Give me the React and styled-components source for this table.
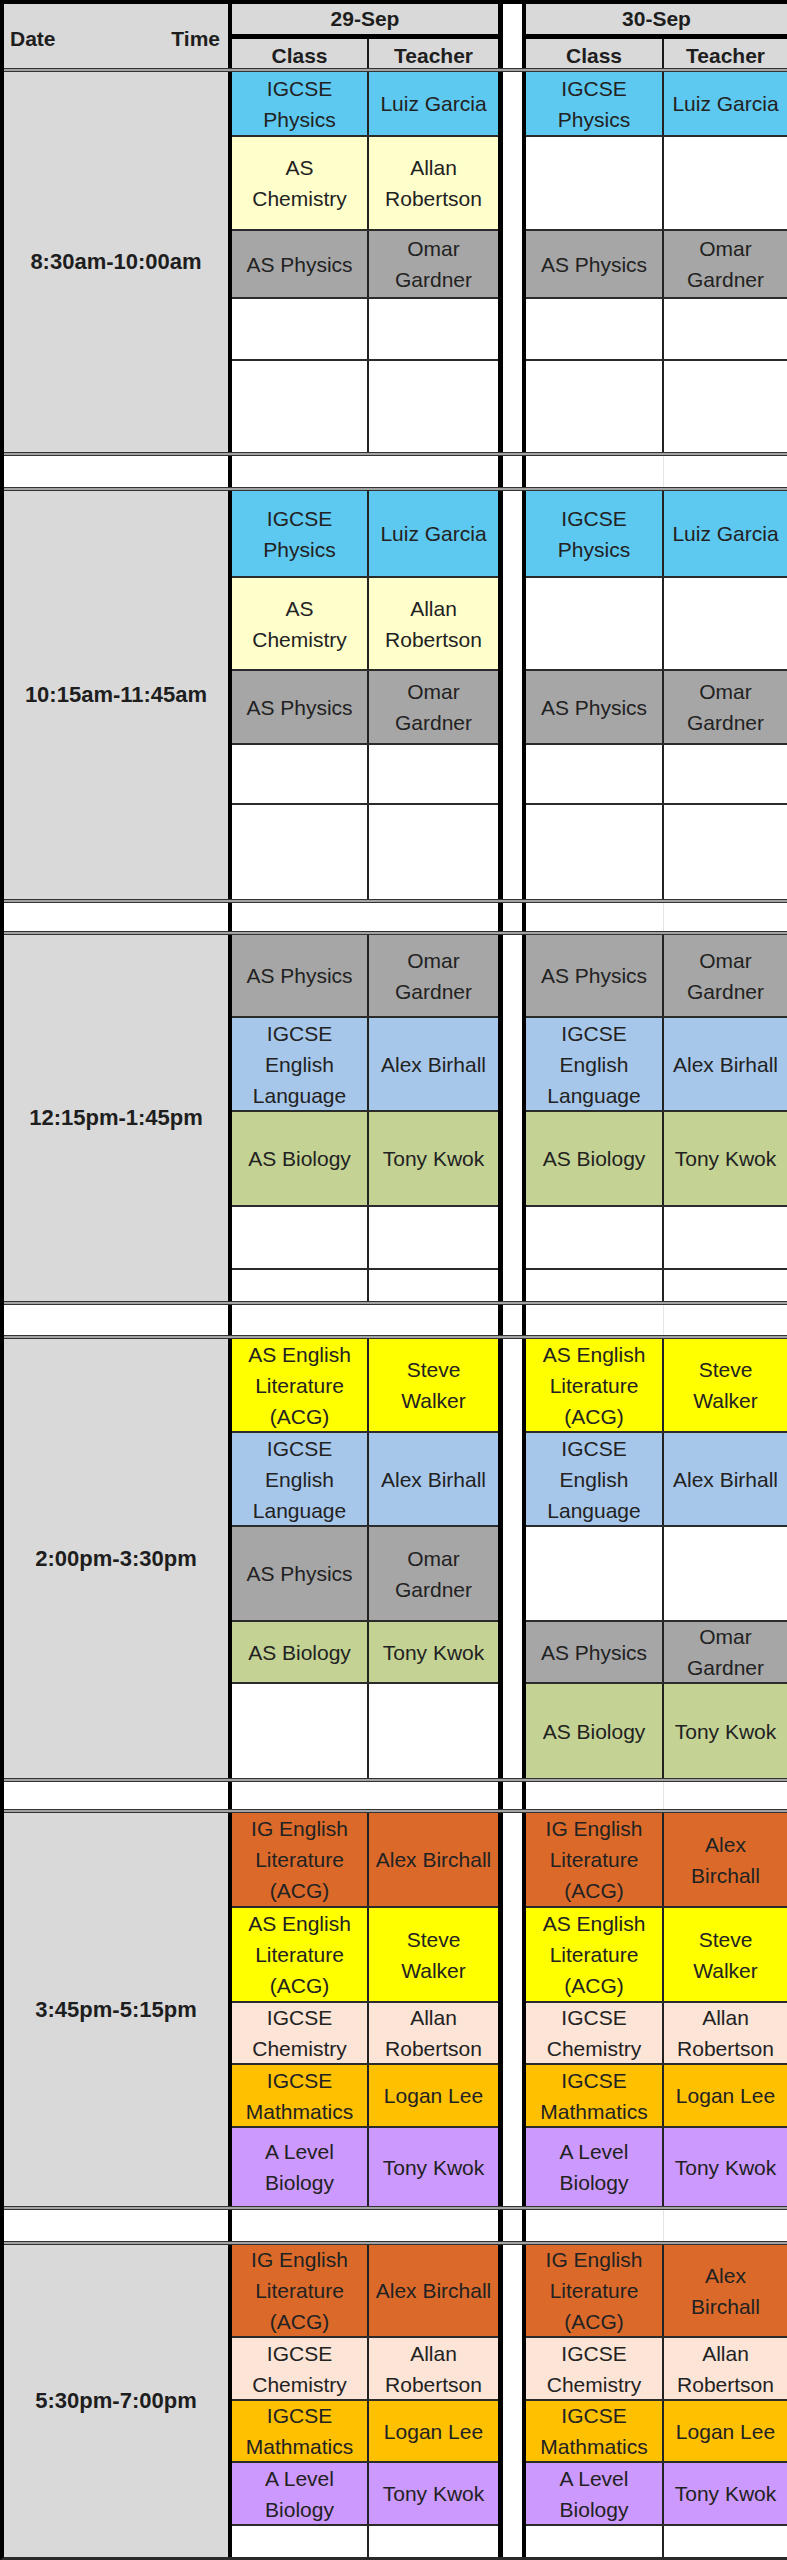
import React from 'react';
import styled, { createGlobalStyle, css } from 'styled-components';

const GlobalStyle = createGlobalStyle`
  html, body { margin: 0; padding: 0; background: #ffffff; }
  body {
    font-family: "Liberation Sans", Arial, sans-serif;
    color: #1e1e1e;
  }
  *, *::before, *::after { box-sizing: border-box; }
`;

const C = {
  head: '#d9d9d9',
  blue: '#5dc8f0',
  cream: '#ffffcc',
  gray: '#a6a6a6',
  steel: '#a7c7ea',
  olive: '#c4d294',
  yellow: '#ffff00',
  orange: '#db6a2a',
  peach: '#fce4d6',
  amber: '#ffc000',
  lavender: '#cc99ff',
  white: '#ffffff',
};

const DAY1 = { width: 271, classW: 137, side: 'left' };
const DAY2 = { width: 265, classW: 138, side: 'right' };

const Sheet = styled.div`
  width: 787px;
  display: flex;
  flex-direction: column;
  border-top: 4px solid #000;
  border-left: 4px solid #000;
  border-bottom: 3px solid #2a2a2a;
`;

const HeaderBand = styled.div`
  display: flex;
  height: 64px;
`;

const CornerCell = styled.div`
  width: 228px;
  flex: none;
  background: ${C.head};
  border-right: 4px solid #000;
  display: flex;
  align-items: center;
  justify-content: space-between;
  padding: 6px 8px 0 6px;
  font-weight: 700;
  font-size: 21px;
`;

const dayEdges = css`
  width: ${(p) => p.$w}px;
  flex: none;
  border-right: ${(p) => (p.$side === 'left' ? '5px solid #000' : 'none')};
  border-left: ${(p) => (p.$side === 'right' ? '4px solid #000' : 'none')};
`;

const DayHead = styled.div`
  ${dayEdges}
  display: flex;
  flex-direction: column;
`;

const DateTitle = styled.div`
  height: 35px;
  background: ${C.head};
  border-bottom: 5px solid #000;
  display: flex;
  align-items: center;
  justify-content: center;
  font-weight: 700;
  font-size: 21px;
`;

const SubHead = styled.div`
  display: flex;
  height: 29px;
  background: ${C.head};
`;

const SubCell = styled.div`
  width: ${(p) => (p.$w ? `${p.$w}px` : 'auto')};
  flex: ${(p) => (p.$w ? 'none' : '1')};
  border-right: ${(p) => (p.$w ? '2px solid #1a1a1a' : 'none')};
  display: flex;
  align-items: center;
  justify-content: center;
  padding-top: 4px;
  font-weight: 700;
  font-size: 21px;
`;

const GapCol = styled.div`
  width: 19px;
  flex: none;
  background: #fff;
`;

const DoubleRule = styled.div`
  height: 4px;
  background: #a3a3a3;
  border-top: 1px solid #333;
  border-bottom: 1px solid #333;
`;

const SectionBand = styled.div`
  display: flex;
`;

const TimeCell = styled.div`
  width: 228px;
  flex: none;
  background: ${C.head};
  border-right: 4px solid #000;
  display: flex;
  align-items: center;
  justify-content: center;
  font-weight: 700;
  font-size: 22px;
  white-space: nowrap;
`;

const DayColumn = styled.div`
  ${dayEdges}
  display: flex;
  flex-direction: column;
`;

const LessonRow = styled.div`
  display: flex;
  height: ${(p) => p.$h}px;
  background: ${(p) => p.$bg};
  border-bottom: ${(p) => (p.$last ? 'none' : '2px solid #2b2b2b')};
`;

const cellText = css`
  display: flex;
  flex-direction: column;
  align-items: center;
  justify-content: center;
  text-align: center;
  font-size: 21px;
  line-height: 31px;
  color: #222;
  padding: 0 2px;
`;

const ClassCell = styled.div`
  ${cellText}
  width: ${(p) => p.$w}px;
  flex: none;
  border-right: 2px solid #222;
`;

const TeacherCell = styled.div`
  ${cellText}
  flex: 1;
  min-width: 0;
`;

const Line = styled.span`
  display: block;
  white-space: nowrap;
`;

const BreakBand = styled.div`
  display: flex;
  height: ${(p) => p.$h}px;
`;

const BreakDate = styled.div`
  width: 228px;
  flex: none;
  background: #fff;
  border-right: 4px solid #000;
`;

const BreakDay = styled.div`
  ${dayEdges}
  display: flex;
  background: #fff;
`;

const BreakClass = styled.div`
  width: ${(p) => p.$w}px;
  flex: none;
  border-right: ${(p) => (p.$faint ? '1px solid #e4e4e4' : 'none')};
`;

const L = {
  igPhys: { c: ['IGCSE', 'Physics'], t: ['Luiz Garcia'], bg: C.blue },
  asChem: { c: ['AS', 'Chemistry'], t: ['Allan', 'Robertson'], bg: C.cream },
  asPhys: { c: ['AS Physics'], t: ['Omar', 'Gardner'], bg: C.gray },
  igEng: { c: ['IGCSE', 'English', 'Language'], t: ['Alex Birhall'], bg: C.steel },
  asBio: { c: ['AS Biology'], t: ['Tony Kwok'], bg: C.olive },
  asLit: { c: ['AS English', 'Literature', '(ACG)'], t: ['Steve', 'Walker'], bg: C.yellow },
  igLit: { c: ['IG English', 'Literature', '(ACG)'], t: ['Alex Birchall'], bg: C.orange },
  igLit2: { c: ['IG English', 'Literature', '(ACG)'], t: ['Alex', 'Birchall'], bg: C.orange },
  igChem: { c: ['IGCSE', 'Chemistry'], t: ['Allan', 'Robertson'], bg: C.peach },
  igMath: { c: ['IGCSE', 'Mathmatics'], t: ['Logan Lee'], bg: C.amber },
  alBio: { c: ['A Level', 'Biology'], t: ['Tony Kwok'], bg: C.lavender },
};

const SECTIONS = [
  {
    time: '8:30am-10:00am',
    rows: [65, 94, 68, 62, 91],
    d1: [L.igPhys, L.asChem, L.asPhys, null, null],
    d2: [L.igPhys, null, L.asPhys, null, null],
    gap: 31,
  },
  {
    time: '10:15am-11:45am',
    rows: [87, 93, 74, 60, 94],
    d1: [L.igPhys, L.asChem, L.asPhys, null, null],
    d2: [L.igPhys, null, L.asPhys, null, null],
    gap: 28,
  },
  {
    time: '12:15pm-1:45pm',
    rows: [83, 94, 95, 63, 31],
    d1: [L.asPhys, L.igEng, L.asBio, null, null],
    d2: [L.asPhys, L.igEng, L.asBio, null, null],
    gap: 30,
  },
  {
    time: '2:00pm-3:30pm',
    rows: [94, 94, 95, 62, 94],
    d1: [L.asLit, L.igEng, L.asPhys, L.asBio, null],
    d2: [L.asLit, L.igEng, null, L.asPhys, L.asBio],
    gap: 27,
  },
  {
    time: '3:45pm-5:15pm',
    rows: [95, 95, 62, 63, 78],
    d1: [L.igLit, L.asLit, L.igChem, L.igMath, L.alBio],
    d2: [L.igLit2, L.asLit, L.igChem, L.igMath, L.alBio],
    gap: 31,
  },
  {
    time: '5:30pm-7:00pm',
    rows: [93, 63, 62, 63, 31],
    d1: [L.igLit, L.igChem, L.igMath, L.alBio, null],
    d2: [L.igLit2, L.igChem, L.igMath, L.alBio, null],
    gap: 0,
  },
];

function Lines({ items }) {
  return (items || []).map((t, i) => <Line key={i}>{t}</Line>);
}

function Day({ day, rows, lessons }) {
  return (
    <DayColumn $w={day.width} $side={day.side}>
      {rows.map((h, i) => {
        const lesson = lessons[i];
        return (
          <LessonRow key={i} $h={h} $bg={lesson ? lesson.bg : C.white} $last={i === rows.length - 1}>
            <ClassCell $w={day.classW}>
              <Lines items={lesson && lesson.c} />
            </ClassCell>
            <TeacherCell>
              <Lines items={lesson && lesson.t} />
            </TeacherCell>
          </LessonRow>
        );
      })}
    </DayColumn>
  );
}

function DayHeader({ day, label }) {
  return (
    <DayHead $w={day.width} $side={day.side}>
      <DateTitle>{label}</DateTitle>
      <SubHead>
        <SubCell $w={day.classW}>Class</SubCell>
        <SubCell>Teacher</SubCell>
      </SubHead>
    </DayHead>
  );
}

function BreakRow({ h }) {
  return (
    <BreakBand $h={h}>
      <BreakDate />
      <BreakDay $w={DAY1.width} $side={DAY1.side}>
        <BreakClass $w={DAY1.classW} />
      </BreakDay>
      <GapCol />
      <BreakDay $w={DAY2.width} $side={DAY2.side}>
        <BreakClass $w={DAY2.classW} $faint />
      </BreakDay>
    </BreakBand>
  );
}

export default function App() {
  return (
    <>
      <GlobalStyle />
      <Sheet>
        <HeaderBand>
          <CornerCell>
            <span>Date</span>
            <span>Time</span>
          </CornerCell>
          <DayHeader day={DAY1} label="29-Sep" />
          <GapCol />
          <DayHeader day={DAY2} label="30-Sep" />
        </HeaderBand>
        <DoubleRule />
        {SECTIONS.map((s, i) => (
          <React.Fragment key={s.time}>
            <SectionBand>
              <TimeCell>{s.time}</TimeCell>
              <Day day={DAY1} rows={s.rows} lessons={s.d1} />
              <GapCol />
              <Day day={DAY2} rows={s.rows} lessons={s.d2} />
            </SectionBand>
            {s.gap > 0 && (
              <>
                <DoubleRule />
                <BreakRow h={s.gap} />
                <DoubleRule />
              </>
            )}
          </React.Fragment>
        ))}
      </Sheet>
    </>
  );
}
